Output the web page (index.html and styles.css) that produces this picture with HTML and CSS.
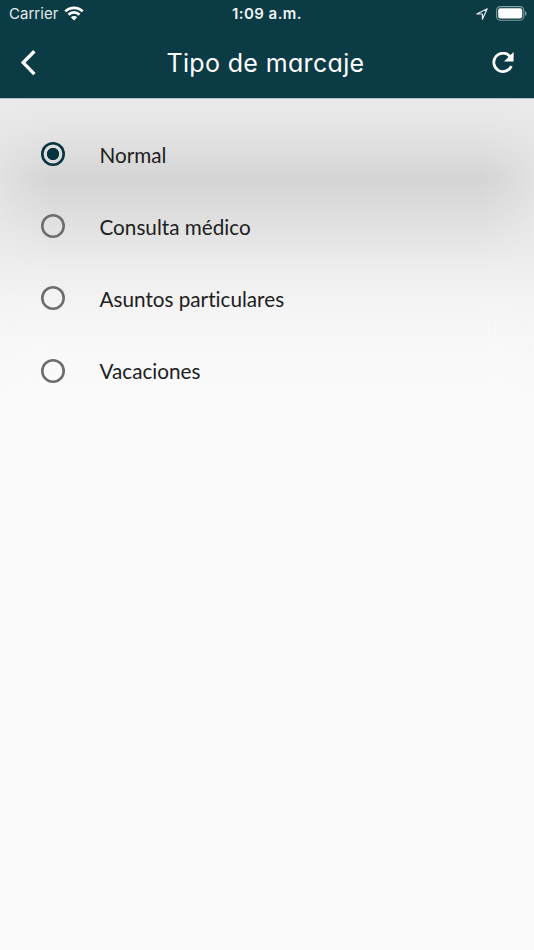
FILE: index.html
```html
<!DOCTYPE html>
<html lang="es">
<head>
<meta charset="utf-8">
<title>Tipo de marcaje</title>
<link rel="stylesheet" href="styles.css">
</head>
<body>
<header class="header">
  <div class="status">
    <div class="carrier">
      <span>Carrier</span>
      <svg class="wifi" width="20" height="15" viewBox="0 0 20 15">
        <path fill="none" stroke="#fff" stroke-width="2.7" d="M1.3 5.4C6.2.6 13.8.6 18.7 5.4M4.5 8.7c3.1-3 7.9-3 11 0"/>
        <path fill="#fff" d="M6.8 11.2c1.8-1.7 4.6-1.7 6.4 0L10 14.4z"/>
      </svg>
    </div>
    <span class="time">1:09 a.m.</span>
    <div class="indicators">
      <svg width="12" height="12" viewBox="0 0 12 12"><path fill="none" stroke="#e4eced" stroke-width="1.2" stroke-linejoin="round" d="M.8 6 11.2.8 6.4 11.3V6z"/></svg>
      <svg width="31" height="15" viewBox="0 0 31 15">
        <rect x=".6" y=".6" width="27.2" height="13.6" rx="3.8" fill="none" stroke="#839da1" stroke-width="1.1"/>
        <rect x="2.2" y="2.2" width="24" height="10.4" rx="2" fill="#fff"/>
        <path fill="#839da1" d="M29 5.2c2 .6 2 3.9 0 4.5z"/>
      </svg>
    </div>
  </div>
  <nav class="toolbar">
    <svg width="16" height="26" viewBox="0 0 16 26"><path fill="none" stroke="#fff" stroke-width="3.4" d="M14.4 1.2 3.2 12.6l11.2 11.5"/></svg>
    <h1 class="title">Tipo de marcaje</h1>
    <svg width="22" height="22" viewBox="0 0 22 22">
      <path fill="none" stroke="#fff" stroke-width="2.7" d="M18.2 4.6A9.2 9.2 0 1 0 19.4 14.1"/>
      <path fill="#fff" d="M21.6 0v9.6H12z"/>
    </svg>
  </nav>
</header>
<main class="content">
  <label class="option"><span class="radio selected"></span><span>Normal</span></label>
  <label class="option"><span class="radio"></span><span>Consulta médico</span></label>
  <label class="option"><span class="radio"></span><span>Asuntos particulares</span></label>
  <label class="option"><span class="radio"></span><span>Vacaciones</span></label>
</main>
</body>
</html>
```
FILE: styles.css
```css
* { box-sizing: border-box; }
body { margin: 0; min-height: 950px; background: #fafafa; font-family: Lato, sans-serif; }
svg { display: block; flex: none; }
.header { height: 98px; background: #0b3b45; color: #fff; }
.status {
  height: 28px; padding: 0 7px 0 9px;
  display: grid; grid-template-columns: 1fr auto 1fr; align-items: center;
  font: 400 15px/28px Inter, sans-serif;
}
.carrier { display: flex; align-items: center; gap: 6px; color: #e4eced; letter-spacing: .02px; }
.wifi { margin-top: -2px; }
.time { font-weight: 600; letter-spacing: .45px; color: #eef3f3; margin-left: -2px; }
.indicators { display: flex; justify-content: flex-end; align-items: center; gap: 8px; margin-top: -1px; }
.toolbar { height: 70px; padding: 0 20px 1px; display: flex; align-items: center; justify-content: space-between; }
.title { margin: 0 0 0 3px; font: 400 25px/36px Inter, sans-serif; font-feature-settings: "cv11"; letter-spacing: .35px; }
.content {
  position: relative; min-height: 852px; padding-top: 20px;
  border-top: 1px solid #b5c0c2;
  background: linear-gradient(#ebebeb 0, #e7e7e7 35px, #e2e2e2 75px, #e3e3e3 95px, #e8e8e8 125px, #eeeeee 165px, #f4f4f4 205px, #f8f8f8 245px, #fafafa 290px);
}
.content::before {
  content: ""; position: absolute; inset: 0 0 auto; height: 290px;
  background: linear-gradient(#e9e9e9 0, #e6e6e6 25px, #dddddd 54px, #d5d5d5 78px, #d6d6d6 84px, #dddddd 113px, #e5e5e5 140px, #eeeeee 172px, #f4f4f4 207px, #f8f8f8 245px, #fafafa 290px);
  mask-image: linear-gradient(90deg, transparent, #0006 18px, #000b 34px, #000 50px, #000 484px, #000b 500px, #0006 516px, transparent);
}
.option {
  position: relative; height: 72.2px; padding-left: 41px;
  display: flex; align-items: center; gap: 34.5px;
  color: #202020; font-size: 20.7px; line-height: 28px; font-variant-ligatures: none;
}
.option > span:last-child { margin-top: -1px; }
.radio { width: 24px; height: 24px; margin-top: -2px; border-radius: 50%; box-shadow: inset 0 0 0 2.6px #6d6d6d; }
.selected { box-shadow: inset 0 0 0 2.6px #07343e; background: radial-gradient(circle, #07343e 5.8px, transparent 6.5px); }
```
